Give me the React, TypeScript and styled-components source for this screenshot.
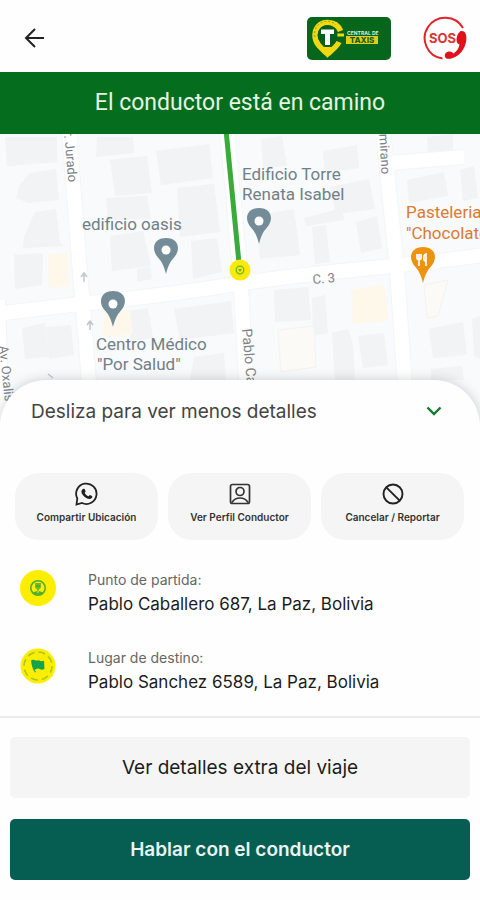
import React from "react";
import styled, { createGlobalStyle } from "styled-components";

const GlobalStyle = createGlobalStyle`
  * { box-sizing: border-box; }
  body { margin: 0; background: #fefefe; font-family: Inter, "Liberation Sans", sans-serif; color: #1c1c1c; }
  button { font: inherit; color: inherit; border: 0; padding: 0; cursor: pointer; }
`;

const Screen = styled.main`
  display: flex;
  flex-direction: column;
  min-height: 100vh;
`;

const TopBar = styled.header`
  display: flex;
  align-items: center;
  height: 72px;
  padding: 4px 12px 0 20px;
  background: #fefefe;
`;

const IconButton = styled.button`
  display: flex;
  background: transparent;
`;

const Brand = styled.div`
  display: flex;
  margin-left: auto;
  margin-right: 31px;
`;

const Banner = styled.h1`
  margin: 0;
  height: 62px;
  line-height: 62px;
  background: #046e1e;
  color: #e4f3e2;
  text-align: center;
  font-family: Roboto, sans-serif;
  font-size: 23px;
  font-weight: 400;
`;

const MapView = styled.svg`
  display: block;
  width: 100%;
  height: 292px;
  background: #f8fafb;
`;

const Sheet = styled.section`
  position: relative;
  flex: 1;
  margin-top: -46px;
  border-radius: 46px 46px 0 0;
  background: #fefefe;
  box-shadow: 0 0 12px rgba(60, 64, 67, 0.24);
`;

const SheetToggle = styled.button`
  display: flex;
  width: 100%;
  height: 62px;
  align-items: center;
  justify-content: space-between;
  padding: 0 38px 0 31px;
  background: transparent;
  font-size: 19px;
  color: #444;
`;

const Actions = styled.div`
  display: grid;
  grid-template-columns: repeat(3, 1fr);
  gap: 10px;
  padding: 31px 16px 0 15px;
`;

const ActionTile = styled.button`
  display: flex;
  flex-direction: column;
  align-items: center;
  gap: 3px;
  height: 67px;
  padding-top: 9px;
  border-radius: 24px;
  background: #f5f5f5;
  font-size: 10px;
  line-height: 16px;
  font-weight: 600;
  white-space: nowrap;
  color: #333;
`;

const Stops = styled.dl`
  display: flex;
  flex-direction: column;
  gap: 30px;
  margin: 0;
  padding: 28px 20px 22px;
`;

const Stop = styled.div`
  display: grid;
  grid-template-columns: 36px 1fr;
  column-gap: 32px;
  align-items: start;
`;

const StopIcon = styled.span`
  display: flex;
  padding-top: 2px;
`;

const StopText = styled.div`
  line-height: 24px;
`;

const StopLabel = styled.dt`
  font-size: 14px;
  color: #666;
`;

const StopValue = styled.dd`
  margin: 0;
  font-size: 17px;
  color: #1c1c1c;
`;

const Footer = styled.footer`
  display: flex;
  flex-direction: column;
  gap: 21px;
  padding: 19px 10px 20px;
  border-top: 2px solid #ebebeb;
`;

const WideButton = styled.button<{ $primary?: boolean }>`
  height: 61px;
  border-radius: 5px;
  background: ${(p) => (p.$primary ? "#065e53" : "#f5f5f5")};
  && { color: ${(p) => (p.$primary ? "#e8f5f1" : "#1c1c1c")}; }
  font-size: 19px;
  font-weight: ${(p) => (p.$primary ? 600 : 400)};
`;

const BackIcon = () => (
  <svg width="30" height="30" viewBox="0 0 30 30" fill="none" stroke="#222" strokeWidth="2">
    <path d="M24 15H6.5M15 6L6 15l9 9" />
  </svg>
);

const BrandLogo = () => (
  <svg width="84" height="43" viewBox="0 0 84 43" role="img" aria-label="Central de Taxis">
    <rect width="84" height="43" rx="5" fill="#05661c" />
    <path
      d="M33.500 14C31 7.500 26 5.500 20.500 5.500C12 5.500 8 12 8 18.500C8 27 15 32 20.500 37C25 33 30 29.500 32 25"
      fill="none" stroke="#f2d813" strokeWidth="5.500"
    />
    <path d="M14 30h13l-6.500 9z" fill="#f2d813" />
    <path d="M28 18h9" stroke="#f2d813" strokeWidth="3" />
    <circle cx="20.500" cy="18" r="10" fill="#075f1d" />
    <path d="M8 20A12.500 12.500 0 0 1 29 8" fill="none" stroke="#8e9b17" strokeWidth="1" strokeDasharray="2 2" />
    <path d="M14 12.500h13v4.500h-4v11h-5V17h-4z" fill="#fff" />
    <text x="40" y="17.500" fontSize="5" fontWeight="700" fill="#dcefdc">CENTRAL DE</text>
    <rect x="39" y="19" width="32" height="8" fill="#e3cd18" />
    <text x="55" y="26" fontSize="8" fontWeight="800" textAnchor="middle" fill="#145d1a">TAXIS</text>
  </svg>
);

const SosIcon = () => (
  <svg width="46" height="46" viewBox="0 0 46 46" fill="none">
    <path d="M41 13A20.500 20.500 0 1 0 20.500 43.500" stroke="#e3232c" strokeWidth="2" />
    <text x="20.500" y="28" fontSize="13" fontWeight="700" textAnchor="middle" fill="#dc3434">SOS</text>
    <path
      d="M38 16.500c2.500-1 5 0 5.800 2.500c1.500 5 .2 12-4 17.500c-4.500 5.500-10 7.700-14.500 7.300c-2.500-.5-3.300-4-1.500-5.800c1.500-1.300 4.500-2 6.200-.8l1.500 1.200c3-1.700 5.500-5.500 6-9l-1.700-1c-2-1.200-1.800-8.500 2.200-11.900z"
      fill="#e0111d"
    />
  </svg>
);

const WhatsappIcon = () => (
  <svg width="24" height="24" viewBox="0 0 24 24" fill="none">
    <path d="M1.500 22.500l.8-6A10.200 10.200 0 1 1 7 21z" stroke="#222" strokeWidth="1.800" />
    <path
      d="M8.500 6.800c.7-.2 1.100 0 1.400.8l.7 1.700c.1.500-.6 1.200-.9 1.600c.9 1.600 2.100 2.600 3.800 3.300c.5-.4.9-1.300 1.400-1.300l2.100 1c.6.300.3 1.600-.3 2.200c-1.300 1.300-3.300 1-5.500-.1c-2.400-1.300-4.500-3.800-4.800-6c-.1-1.300.8-2.900 2.100-3.200z"
      fill="#222"
    />
  </svg>
);

const ProfileIcon = () => (
  <svg width="24" height="24" viewBox="0 0 24 24" fill="none" stroke="#333" strokeWidth="1.700">
    <rect x="2.500" y="2.500" width="19" height="19" rx="2" />
    <circle cx="12" cy="9.500" r="4" />
    <path d="M4 20.500c2-3.600 4.500-4.500 8-4.500s6 .9 8 4.500" />
  </svg>
);

const CancelIcon = () => (
  <svg width="24" height="24" viewBox="0 0 24 24" fill="none" stroke="#222" strokeWidth="1.900">
    <circle cx="12" cy="12" r="9.500" />
    <path d="M5.300 5.300l13.400 13.400" />
  </svg>
);

const ChevronIcon = () => (
  <svg width="16" height="12" viewBox="0 0 16 12" fill="none" stroke="#107c2c" strokeWidth="2.400">
    <path d="M1.500 2.500L8 9l6.500-6.500" />
  </svg>
);

const StartIcon = () => (
  <svg width="36" height="36" viewBox="0 0 36 36" fill="none">
    <circle cx="18" cy="18" r="18" fill="#fdee00" />
    <circle cx="18" cy="18" r="7.200" stroke="#52ae2e" strokeWidth="1.600" />
    <path d="M15 13h6v3.500c0 4-6 4-6 0z" fill="#74b928" />
    <path d="M16 16h4M18 19v2" stroke="#319d35" />
    <path d="M13 23c1-2.500 9-2.500 10 0c-2 2.500-8 2.500-10 0z" fill="#52ae2e" />
    <path d="M17 21.500l1 2 1-2z" fill="#fdee00" />
  </svg>
);

const FinishIcon = () => (
  <svg width="36" height="36" viewBox="0 0 36 36" fill="none">
    <circle cx="18" cy="18" r="17.500" fill="#fdee00" />
    <circle cx="18" cy="18" r="14" stroke="#a4c523" strokeWidth="1.500" strokeDasharray="7 4" />
    <path d="M11 12.500c2-1.500 3.500 0 5 0s3-1 4.500.5c1 .6 2.500.2 3.500-.2l.5 8c-2 1.500-4 .8-5.500 0c-1.700-.8-2.800.2-4.500 1.200l1.500 2-1 .5c-2.300-3-3.500-8-4-12z" fill="#16a24a" />
  </svg>
);

const blocks: string[] = [
  "5,137 57,137 57,162 7,166",
  "20,184 30,173 56,169 59,200 28,203 16,198",
  "35,212 56,209 60,242 64,246 23,248 24,237",
  "14,255 43,253 42,285 15,289",
  "97,137 133,137 134,153 96,157",
  "110,160 147,156 152,193 115,196",
  "156,151 209,144 213,178 161,185",
  "106,198 147,196 151,219 108,220",
  "177,188 214,184 220,232 180,237",
  "110,236 143,231 151,266 112,271",
  "191,241 217,238 222,272 193,279",
  "137,269 150,267 152,279 137,282",
  "22,328 45,323 49,357 25,359",
  "46,327 71,325 74,355 49,359",
  "128,311 148,308 153,338 131,341",
  "174,309 231,301 234,333 180,340",
  "194,357 224,353 226,380 190,380",
  "261,139 282,136 287,166 263,168",
  "323,151 357,145 359,168 325,173",
  "330,187 369,179 375,209 336,214",
  "304,218 342,208 344,220 306,226",
  "257,215 294,209 300,255 260,259",
  "312,227 326,225 330,262 315,264",
  "356,222 377,216 382,248 361,253",
  "427,137 453,134 453,150 428,152",
  "407,180 444,172 448,196 409,203",
  "460,170 474,166 478,198 463,201",
  "274,290 308,287 311,320 275,322",
  "312,298 325,295 328,333 313,336",
  "332,333 348,329 353,344 355,380 335,380",
  "358,336 384,333 388,365 363,368",
  "429,329 463,322 467,355 433,358",
  "472,319 480,316 480,359 474,356",
  "431,369 462,366 464,380 431,380",
];

const beigeBlocks: string[] = [
  "48,255 67,253 69,286 49,288",
  "105,313 130,310 133,334 102,337",
  "351,290 384,285 388,320 353,324",
];

const paleBlocks: string[] = [
  "424,285 448,280 438,316 427,318",
  "278,330 314,326 316,367 281,372",
];

const roads: string[] = [
  "M-10 315C100 300 130 301 230 285S400 268 490 254",
  "M69 130L79 260L93 430",
  "M227 130L240 270L249 430",
  "M383 130L397 270L408 430",
  "M390 163L464 157",
  "M-2 300L2 430",
];

const MapPin = ({ x, y, color = "#748c98" }: { x: number; y: number; color?: string }) => (
  <g transform={`translate(${x} ${y})`}>
    <path d="M0 23C-2 15-4 11-8 6.500C-15-1 -13-13 0-13C13-13 15-1 8 6.500C4 11 2 15 0 23z" fill={color} />
  </g>
);

const CityMap = () => (
  <MapView
    viewBox="0 134 480 292"
    preserveAspectRatio="xMidYMin slice"
    role="img"
    aria-label="Mapa del recorrido"
    fontFamily="Roboto, sans-serif"
  >
    <g fill="#f1f3f4">
      {blocks.map((p) => <polygon key={p} points={p} />)}
    </g>
    <g fill="#fdf8ea">
      {beigeBlocks.map((p) => <polygon key={p} points={p} />)}
    </g>
    <g fill="#fbfaf6" stroke="#f3f3f0">
      {paleBlocks.map((p) => <polygon key={p} points={p} />)}
    </g>
    <g fill="none" stroke="#f3f5f6" strokeWidth="16">
      {roads.map((d) => <path key={d} d={d} />)}
    </g>
    <g fill="none" stroke="#fff" strokeWidth="14">
      {roads.map((d) => <path key={d} d={d} />)}
    </g>
    <g fill="none" stroke="#c0c6cc" strokeWidth="1.500">
      <path d="M84 282v-9m-3 4l3-4 3 4M90 330v-9m-3 4l3-4 3 4" />
      <path d="M48 374l5 4" />
    </g>
    <g fontSize="13" fill="#7d8286">
      <text transform="translate(64 132) rotate(85)">r. Jurado</text>
      <text transform="translate(379 127) rotate(87)">amirano</text>
      <text transform="translate(242 329) rotate(85)" fontSize="14">Pablo Caballero</text>
      <text transform="translate(-1 346) rotate(84)">Av. Oxalis</text>
      <text x="313" y="284" transform="rotate(-5 313 284)">C. 3</text>
    </g>
    <path d="M226 130L239 263" stroke="#39ab3b" strokeWidth="5" />
    <circle cx="240" cy="270" r="10.500" fill="#fbea0c" />
    <circle cx="240" cy="270" r="3.800" fill="none" stroke="#6bb425" strokeWidth="1.300" />
    <path d="M238 269h4l-2 3z" fill="#6bb425" />

    <MapPin x={166} y={251} />
    <circle cx="166" cy="250" r="4.500" fill="#fff" />
    <MapPin x={259} y={221} />
    <circle cx="259" cy="221" r="4.500" fill="#fff" />
    <MapPin x={113} y={304} />
    <circle cx="113" cy="304" r="4.500" fill="#fff" />
    <MapPin x={423} y={260} color="#ed930f" />
    <path d="M417 254v4c0 2 4 2 4 0v-4M419 254v12M426 266v-12c-3 1-3 7 0 7" fill="none" stroke="#fff" strokeWidth="1.700" />

    <g fontSize="17" fill="#718088">
      <text x="82" y="230">edificio oasis</text>
      <text x="242" y="180">Edificio Torre</text>
      <text x="242" y="200">Renata Isabel</text>
      <text x="96" y="350">Centro Médico</text>
      <text x="97" y="370">"Por Salud"</text>
      <g fill="#db7a32">
        <text x="406" y="218">Pasteleria</text>
        <text x="406" y="239">"Chocolate"</text>
      </g>
    </g>
  </MapView>
);

const actions = [
  { label: "Compartir Ubicación", icon: <WhatsappIcon /> },
  { label: "Ver Perfil Conductor", icon: <ProfileIcon /> },
  { label: "Cancelar / Reportar", icon: <CancelIcon /> },
];

const stops = [
  { label: "Punto de partida:", value: "Pablo Caballero 687, La Paz, Bolivia", icon: <StartIcon /> },
  { label: "Lugar de destino:", value: "Pablo Sanchez 6589, La Paz, Bolivia", icon: <FinishIcon /> },
];

export default function App() {
  return (
    <Screen>
      <GlobalStyle />
      <TopBar>
        <IconButton type="button" aria-label="Volver"><BackIcon /></IconButton>
        <Brand><BrandLogo /></Brand>
        <IconButton type="button" aria-label="SOS"><SosIcon /></IconButton>
      </TopBar>
      <Banner>El conductor está en camino</Banner>
      <CityMap />
      <Sheet>
        <SheetToggle type="button" aria-expanded="true">
          Desliza para ver menos detalles
          <ChevronIcon />
        </SheetToggle>
        <Actions>
          {actions.map((a) => (
            <ActionTile key={a.label} type="button">
              {a.icon}
              {a.label}
            </ActionTile>
          ))}
        </Actions>
        <Stops>
          {stops.map((s) => (
            <Stop key={s.label}>
              <StopIcon>{s.icon}</StopIcon>
              <StopText>
                <StopLabel>{s.label}</StopLabel>
                <StopValue>{s.value}</StopValue>
              </StopText>
            </Stop>
          ))}
        </Stops>
        <Footer>
          <WideButton type="button">Ver detalles extra del viaje</WideButton>
          <WideButton type="button" $primary>Hablar con el conductor</WideButton>
        </Footer>
      </Sheet>
    </Screen>
  );
}
